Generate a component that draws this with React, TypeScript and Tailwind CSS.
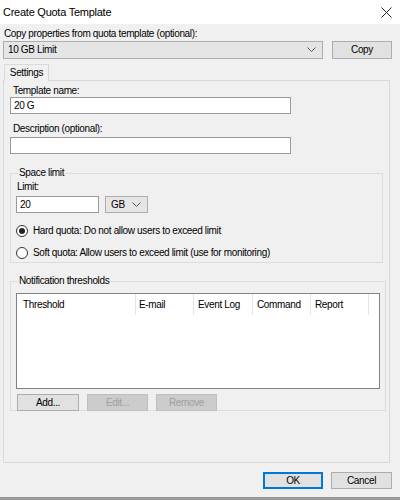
import React from 'react';

const Chevron: React.FC = () => (
  <svg width="9" height="6" viewBox="0 0 9 6" fill="none" stroke="#555" strokeWidth="1">
    <polyline points="0.5,0.5 4.5,4.5 8.5,0.5" />
  </svg>
);

const Radio: React.FC<{ checked?: boolean; label: string }> = ({ checked, label }) => (
  <div className="flex items-center gap-[5px]">
    <span className="w-[12px] h-[12px] rounded-full border border-[#333] bg-white flex items-center justify-center">
      {checked && <span className="w-[6px] h-[6px] rounded-full bg-[#222]" />}
    </span>
    <span>{label}</span>
  </div>
);

const Btn: React.FC<{ label: string; disabled?: boolean; w: string }> = ({ label, disabled, w }) => (
  <div
    className={`${w} h-[17px] flex items-center justify-center border ${
      disabled ? 'bg-[#cccccc] border-[#bfbfbf] text-[#a0a0a0]' : 'bg-[#e1e1e1] border-[#adadad] text-black'
    }`}
  >
    {label}
  </div>
);

const columns = [
  { name: 'Threshold', w: 'w-[119px]', pad: 'pl-[6px]' },
  { name: 'E-mail', w: 'w-[58px]', pad: 'pl-[3px]' },
  { name: 'Event Log', w: 'w-[59px]', pad: 'pl-[4px]' },
  { name: 'Command', w: 'w-[58px]', pad: 'pl-[4px]' },
  { name: 'Report', w: 'w-[58px]', pad: 'pl-[4px]' },
];

export default function App() {
  return (
    <div className="w-[400px] h-[500px] bg-[#f0f0f0] text-black text-[10px] tracking-[-0.35px] leading-[12px] font-['Liberation_Sans',Arial,sans-serif] flex flex-col border-b-[3px] border-[#9a9a9a]">
      {/* title bar */}
      <div className="h-[24px] bg-white flex items-center justify-between pl-[3px] pr-[8px]">
        <span className="text-[11px] tracking-[-0.25px]">Create Quota Template</span>
        <svg width="11" height="11" viewBox="0 0 11 11" stroke="#222" strokeWidth="1">
          <line x1="0.5" y1="0.5" x2="10.5" y2="10.5" />
          <line x1="10.5" y1="0.5" x2="0.5" y2="10.5" />
        </svg>
      </div>

      <div className="px-[3px] pt-[4px] flex flex-col flex-1">
        <div className="pl-[1px] h-[13px]">Copy properties from quota template (optional):</div>
        <div className="flex items-center">
          <div className="w-[320px] h-[18px] bg-[#e5e5e5] border border-[#adadad] flex items-center justify-between pl-[4px] pr-[6px]">
            <span>10 GB Limit</span>
            <Chevron />
          </div>
          <div className="ml-[9px] w-[60px] h-[18px] bg-[#e1e1e1] border border-[#adadad] flex items-center justify-center">
            Copy
          </div>
        </div>

        {/* tabs */}
        <div className="mt-[4px] flex">
          <div className="ml-[1px] w-[45px] h-[17px] bg-[#f0f0f0] border border-b-0 border-[#d9d9d9] flex items-center justify-center relative top-[1px]">
            Settings
          </div>
        </div>
        <div className="w-[387px] h-[383px] border border-[#d9d9d9] bg-[#f0f0f0] px-[6px] pt-[4px] flex flex-col">
          <div className="pl-[3px]">Template name:</div>
          <div className="mt-[0px] w-[281px] h-[17px] bg-white border border-[#9a9a9a] flex items-center pl-[3px]">20 G</div>
          <div className="mt-[9px] pl-[3px]">Description (optional):</div>
          <div className="mt-[2px] w-[281px] h-[17px] bg-white border border-[#9a9a9a]" />

          <fieldset className="mt-[13px] w-[373px] h-[96px] border border-[#dcdcdc] px-[5px]">
            <legend className="ml-[2px] px-[1px]">Space limit</legend>
            <div className="mt-[2px] pl-[1px]">Limit:</div>
            <div className="mt-[3px] flex items-center">
              <div className="w-[83px] h-[17px] bg-white border border-[#9a9a9a] flex items-center pl-[3px]">20</div>
              <div className="ml-[6px] w-[43px] h-[17px] bg-[#e5e5e5] border border-[#adadad] flex items-center justify-between pl-[5px] pr-[6px]">
                <span>GB</span>
                <Chevron />
              </div>
            </div>
            <div className="mt-[12px]">
              <Radio checked label="Hard quota: Do not allow users to exceed limit" />
            </div>
            <div className="mt-[10px]">
              <Radio label="Soft quota: Allow users to exceed limit (use for monitoring)" />
            </div>
          </fieldset>

          <fieldset className="mt-[12px] w-[373px] h-[136px] border border-[#dcdcdc] px-[5px]">
            <legend className="ml-[2px] px-[1px]">Notification thresholds</legend>
            <div className="mt-[6px] w-[364px] h-[96px] bg-white border border-[#828282]">
              <div className="flex h-[21px]">
                {columns.map((c) => (
                  <div key={c.name} className={`${c.w} ${c.pad} h-full flex items-center border-r border-[#e5e5e5]`}>
                    {c.name}
                  </div>
                ))}
              </div>
            </div>
            <div className="mt-[5px] flex gap-[8px] pl-[1px]">
              <Btn label="Add..." w="w-[62px]" />
              <Btn label="Edit..." disabled w="w-[61px]" />
              <Btn label="Remove" disabled w="w-[61px]" />
            </div>
          </fieldset>
        </div>

        <div className="mt-[9px] flex justify-end gap-[8px] pr-[5px]">
          <div className="w-[60px] h-[17px] bg-[#e1e1e1] border-2 border-[#0078d7] flex items-center justify-center">OK</div>
          <div className="w-[61px] h-[17px] bg-[#e1e1e1] border border-[#adadad] flex items-center justify-center">Cancel</div>
        </div>
      </div>
    </div>
  );
}
